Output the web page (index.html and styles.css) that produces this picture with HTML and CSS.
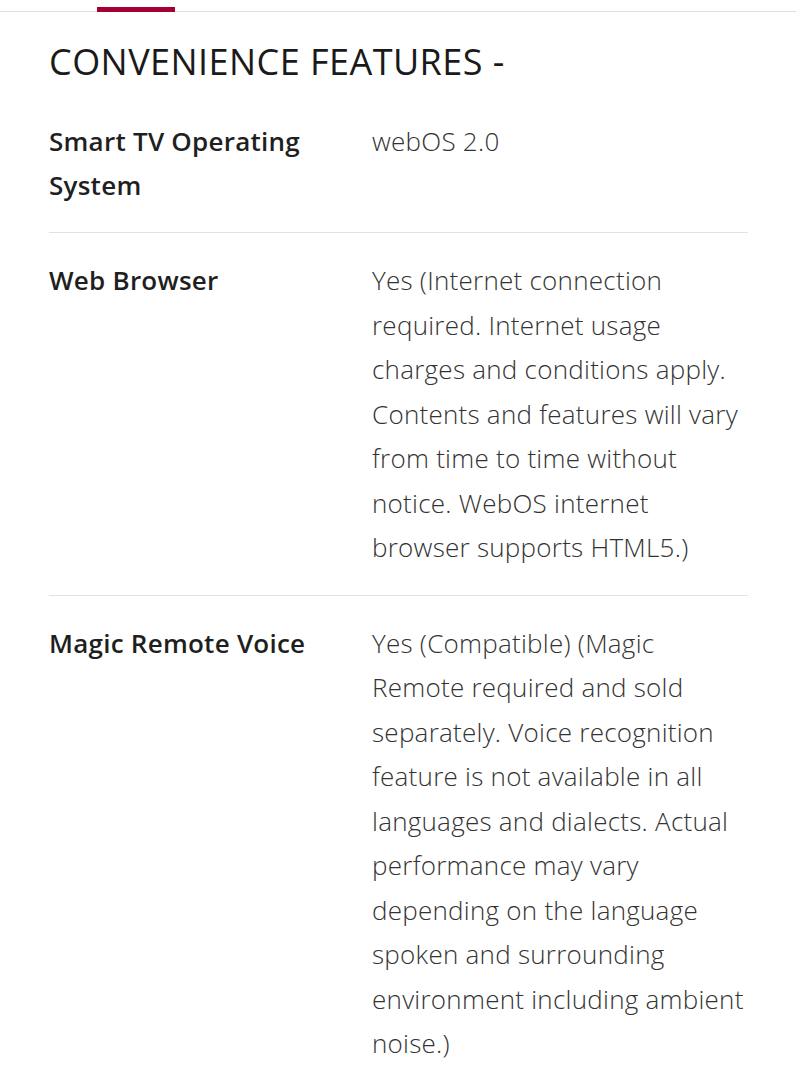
FILE: index.html
```html
<!DOCTYPE html>
<html>
<head>
<meta charset="utf-8">
<link rel="stylesheet" href="styles.css">
</head>
<body>
<div class="tabs">
  <div class="tab-active"></div>
</div>
<section class="specs">
  <h2 class="title">CONVENIENCE FEATURES -</h2>
  <div class="row">
    <div class="label">Smart TV Operating System</div>
    <div class="value">webOS 2.0</div>
  </div>
  <div class="row">
    <div class="label">Web Browser</div>
    <div class="value">Yes (Internet connection required. Internet usage charges and conditions apply. Contents and features will vary from time to time without notice. WebOS internet browser supports HTML5.)</div>
  </div>
  <div class="row">
    <div class="label">Magic Remote Voice</div>
    <div class="value">Yes (Compatible) (Magic Remote required and sold separately. Voice recognition feature is not available in all languages and dialects. Actual performance may vary depending on the language spoken and surrounding environment including ambient noise.)</div>
  </div>
</section>
</body>
</html>
```
FILE: styles.css
```css
html, body {
  margin: 0;
  padding: 0;
  background: #ffffff;
}
body {
  font-family: "Open Sans", "Noto Sans", sans-serif;
  color: #1f1f1f;
  width: 796px;
  height: 1080px;
  overflow: hidden;
}
.tabs {
  height: 11px;
  border-bottom: 1px solid #dedede;
  position: relative;
}
.tab-active {
  position: absolute;
  left: 97px;
  bottom: -1px;
  width: 78px;
  height: 5px;
  background: #a50034;
}
.specs {
  padding: 0 48px 0 49px;
}
.title {
  margin: 0;
  padding-top: 27px;
  font-size: 36px;
  line-height: 46px;
  font-weight: 400;
  color: #1a1a1a;
  letter-spacing: 0.45px;
  margin-bottom: 34px;
}
.row {
  display: flex;
  padding: 0 0 25px;
  border-bottom: 1px solid #e2e2e2;
}
.row + .row {
  padding-top: 25px;
}
.row:last-child {
  border-bottom: none;
}
.label {
  width: 323px;
  flex: none;
  padding-right: 20px;
  box-sizing: border-box;
  font-size: 26px;
  line-height: 44px;
  font-weight: 600;
  letter-spacing: 0.25px;
  color: #1f1f1f;
}
.value {
  flex: 1;
  font-size: 26px;
  line-height: 44.5px;
  font-weight: 300;
  letter-spacing: 0.25px;
  color: #333333;
}
```
